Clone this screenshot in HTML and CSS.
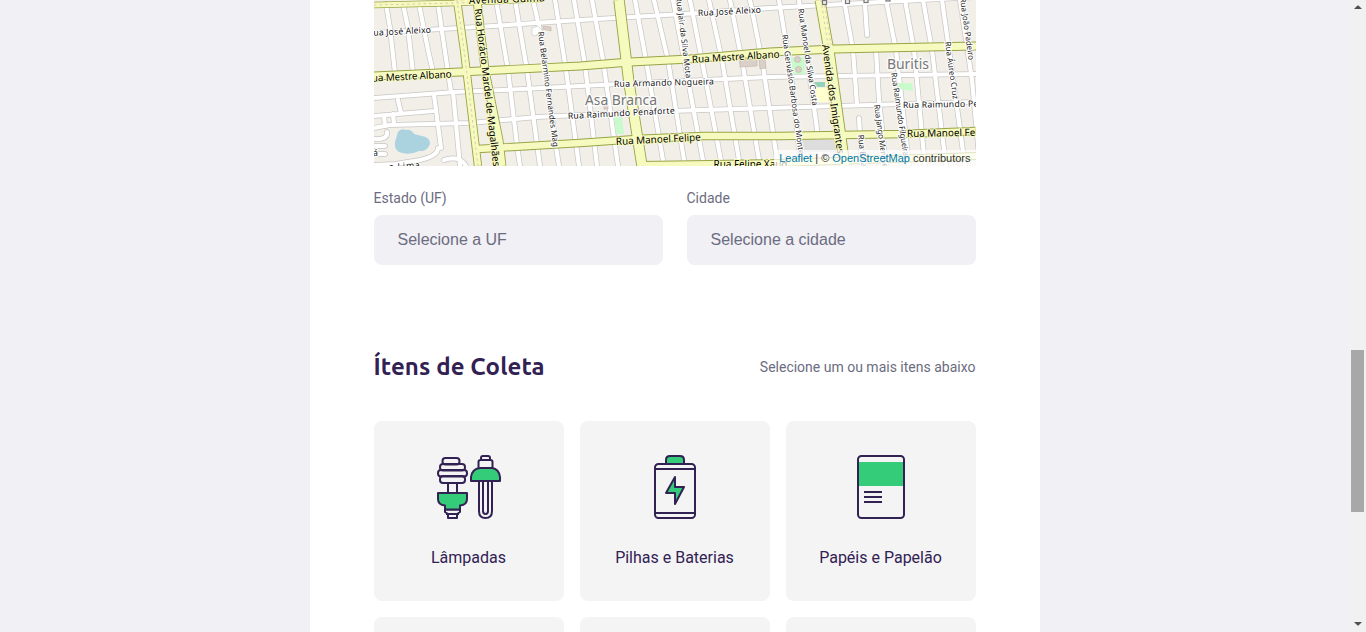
FILE: index.html
```html
<!DOCTYPE html>
<html lang="pt-BR">
<head>
<meta charset="utf-8">
<title>Ecoleta</title>
<link rel="stylesheet" href="styles.css">
</head>
<body>
<div class="page">
<main class="form">
  <div class="map">
    <svg class="map-canvas" viewBox="374 0 602 166" width="602" height="166">
      <defs>
        <g id="streets">
          <path d="M374 33L493 26L580 20L700 13L770 8L976 -3"/>
          <path d="M374 98L455 92L503 90L580 86L660 82L770 77L976 74"/>
          <path d="M374 128L390 125L470 123L537 117L580 115L670 111L770 108L903 104L976 102"/>
          <path d="M386 4L390 28L395 73M403 4L408 28L413 73M419 4L428 50L433 72M438 4L444 45L451 92"/>
          <path d="M434 95L438 125L441 148M453 92L460 166M374 116L434 111M398 100L401 113M384 116L385 126M393 114L394 124"/>
          <path d="M496 0L508 70L517 145L520 166M515 0L527 70L540 166M533 0L541 35L556 147L559 166M555 0L566 70L579 166"/>
          <path d="M574 0L585 65L597 166M592 0L603 60L618 166M635 0L646 60L664 166M654 0L668 60L685 166M673 0L688 80L704 166"/>
          <path d="M690 0L703 66L722 166M709 0L722 60L740 166M730 0L743 66L760 166M750 0L763 66L778 166"/>
          <path d="M779 0L790 67L801 166M799 0L813 100L822 166M844 0L853 50L857 105M865 5L867 35M886 0L896 50L909 166"/>
          <path d="M905 0L914 50L925 166M923 0L932 50L946 166M942 0L956 100L965 166M960 0L972 80L980 166M876 50L879 100L886 166M859 118L862 166"/>
          <path d="M374 139Q388 140 387 132M374 146L385 146M374 154L385 154M444 160Q460 155 466 166"/>
          <path d="M438 148Q438 156 420 160L395 164L374 165"/>
        </g>
        <g id="avenues">
          <path d="M374 5L455 3L540 -1" stroke-width="5"/>
          <path d="M374 76L460 72L580 66L630 62L690 59L770 52L835 49L976 46" stroke-width="7"/>
          <path d="M478 149L580 143L637 139L703 136L780 136L903 134L976 131" stroke-width="6.5"/>
          <path d="M640 165L780 163L976 156" stroke-width="6"/>
          <path d="M457 0L464 50L478 166" stroke-width="6.5"/>
          <path d="M477 0L485 70L499 140L502 166" stroke-width="7"/>
          <path d="M619 0L629 83L642 166" stroke-width="9.5"/>
          <path d="M820 0L830 57L845 166" stroke-width="9"/>
        </g>
      </defs>
      <rect class="land" x="374" width="602" height="166"/>
      <g class="casing"><use href="#streets"/></g>
      <g class="street"><use href="#streets"/></g>
      <path class="park" d="M614 117L622 117L624 134L616 134ZM791 57L804 57L805 74L792 74ZM898 83L912 83L913 91L898 89Z"/>
      <path class="school" d="M816 88L827 88L828 102L817 102Z"/>
      <path class="pitch" d="M814 82L825 82L825 87L816 87Z"/>
      <path class="grey" d="M802 140L836 140L838 152L803 152Z"/>
      <path class="building" d="M740 60L757 59L757 66L740 67ZM759 59L765 59L766 68L760 69ZM543 26L551 27L551 31L543 29ZM604 105L608 105L608 109L604 109Z"/>
      <path class="house" d="M532 28L538 26L542 30L542 34L537 34L537 36L532 35Z"/>
      <circle class="building" cx="797.500" cy="59.500" r="3"/><circle class="building" cx="798.500" cy="69.500" r="3"/>
      <path class="water" d="M398 132Q401 128 406 130Q411 129 414 134L422 136Q430 137 430 144Q427 152 419 151Q409 156 399 152Q394 149 395 142Z"/>
      <g class="avenue-edge">
        <path d="M374 5L455 3L540 -1" stroke-width="6.500"/>
        <path d="M374 76L460 72L580 66L630 62L690 59L770 52L835 49L976 46" stroke-width="8.800"/>
        <path d="M478 149L580 143L637 139L703 136L780 136L903 134L976 131" stroke-width="8.300"/>
        <path d="M640 165L780 163L976 156" stroke-width="7.800"/>
        <path d="M457 0L464 50L478 166" stroke-width="8.300"/>
        <path d="M477 0L485 70L499 140L502 166" stroke-width="8.800"/>
        <path d="M619 0L629 83L642 166" stroke-width="11.300"/>
        <path d="M820 0L830 57L845 166" stroke-width="10.800"/>
      </g>
      <g class="avenue"><use href="#avenues"/></g>
      <path class="median" d="M374 5L455 3L540 -1M457 0L464 50L478 166M821 0L828 45M824 0L831 45"/>
      <g class="signal"><rect x="822.500" y=".5" width="4" height="4"/><rect x="845.500" y="-.5" width="4" height="4"/><rect x="864" y="-1.500" width="4" height="4"/><rect x="886" y="-3" width="4" height="4"/></g>
      <g class="place">
        <text x="585" y="105" textLength="72">Asa Branca</text>
        <text x="887" y="68.500" textLength="42">Buritis</text>
      </g>
      <g class="road-name">
        <text x="469" y="4" textLength="76" transform="rotate(-2 469 4)">Avenida Guima</text>
        <text x="366" y="82" textLength="86" transform="rotate(-3 366 82)">Rua Mestre Albano</text>
        <text x="692" y="63" textLength="88" transform="rotate(-3.500 692 63)">Rua Mestre Albano</text>
        <text x="616" y="145" textLength="85" transform="rotate(-3 616 145)">Rua Manoel Felipe</text>
        <text x="907" y="137" textLength="85" transform="rotate(-1 907 137)">Rua Manoel Felipe</text>
        <text x="713.500" y="168" textLength="74">Rua Felipe Xaud</text>
        <text transform="translate(474.500 9) rotate(83.200)" textLength="159">Rua Horácio Mardel de Magalhães</text>
        <text transform="translate(822 45) rotate(82)" textLength="110">Avenida dos Imigrantes</text>
      </g>
      <g class="street-name">
        <text x="368" y="36" textLength="63" transform="rotate(-3 368 36)">Rua José Aleixo</text>
        <text x="698" y="16" textLength="63" transform="rotate(-3 698 16)">Rua José Aleixo</text>
        <text x="614" y="87" textLength="100" transform="rotate(-1.500 614 87)">Rua Armando Nogueira</text>
        <text x="568" y="119" textLength="107" transform="rotate(-3 568 119)">Rua Raimundo Penaforte</text>
        <text x="903" y="108" textLength="107" transform="rotate(-1 903 108)">Rua Raimundo Penaforte</text>
        <text x="389" y="170" textLength="31" transform="rotate(-4 389 170)">a Lima</text>
        <text x="373" y="156">á</text>
      </g>
      <g class="lane-name">
        <text transform="translate(538 32) rotate(82.500)" textLength="116">Rua Belarmino Fernandes Mag</text>
        <text transform="translate(676 -3) rotate(83)" textLength="82">Rua Jair da Silva Mota</text>
        <text transform="translate(798 9) rotate(81.500)" textLength="98">Rua Manoel da Silva Costa</text>
        <text transform="translate(782 35) rotate(82)" textLength="121">Rua Gervásio Barbosa do Monte</text>
        <text transform="translate(874 105) rotate(82)" textLength="67">Rua Jango Meneses</text>
        <text transform="translate(858 135) rotate(84)">Rua Bela</text>
        <text transform="translate(891 73) rotate(81.500)" textLength="88">Rua Raimundo Filgueiras</text>
        <text transform="translate(945 42) rotate(82)" textLength="58">Rua Áureo Cruz</text>
        <text transform="translate(960 -2) rotate(82)" textLength="63">Rua João Padeiro</text>
      </g>
    </svg>
    <div class="credit"><a>Leaflet</a> | © <a>OpenStreetMap</a> contributors</div>
  </div>
  <div class="fields">
    <label class="field">Estado (UF)<span class="select">Selecione a UF</span></label>
    <label class="field">Cidade<span class="select">Selecione a cidade</span></label>
  </div>
  <div class="legend"><h2>Ítens de Coleta</h2><span>Selecione um ou mais itens abaixo</span></div>
  <ul class="items">
    <li>
      <svg class="icon" width="66" height="66" viewBox="436 454 66 66">
        <rect x="442.500" y="458" width="17" height="6.500" rx="3"/><rect x="440" y="464" width="25" height="6.500" rx="3"/><rect x="438" y="470" width="29" height="6.500" rx="3"/><rect x="440" y="476" width="25" height="7" rx="3"/>
        <path d="M448 483V493M457 483V493M445 509.500H460V512L457 514V518H448V514L445 512ZM446 514H459"/>
        <path class="green" d="M438 493H467V499Q467 505 460 505.500V509.500H445V505.500Q438 505 438 499Z"/>
        <path d="M481 460V458Q481 456 483 456H488Q490 456 490 458V460M478.500 468V462Q478.500 460 480.500 460H490.500Q492.500 460 492.500 462V468M479 481V511Q479 518 485.500 518Q492 518 492 511V481M483 481V511Q483 514 485.500 514Q488 514 488 511V481"/>
        <path class="green" d="M471 481V477Q472 469 480 468H492Q499 469 500 477V481Z"/>
      </svg>
      Lâmpadas
    </li>
    <li>
      <svg class="icon" width="66" height="66" viewBox="642 454 66 66">
        <path class="green" d="M666 464V460Q666 456 670 456H680Q684 456 684 460V464Z"/>
        <rect x="655" y="464" width="40" height="54" rx="3.500"/><path d="M655 469H695M655 513H695"/>
        <path class="green" d="M675 477L666 493H675V504L684 487H675Z"/>
      </svg>
      Pilhas e Baterias
    </li>
    <li>
      <svg class="icon" width="66" height="66" viewBox="848 454 66 66">
        <path class="fill" d="M858 462H904V486H858Z"/><rect x="858" y="456" width="46" height="62" rx="3.500"/><path d="M864 492H882M864 497H882M864 502H882"/>
      </svg>
      Papéis e Papelão
    </li>
    <li></li><li></li><li></li>
  </ul>
</main>
</div>
<div class="scrollbar">
  <svg width="17" height="17"><path d="M5 9L8.500 5.500H9.500L13 9Z"/></svg>
  <div class="thumb"></div>
  <svg width="17" height="17"><path d="M5 7L8.500 10.500H9.500L13 7Z"/></svg>
</div>
</body>
</html>
```
FILE: styles.css
```css
* { box-sizing: border-box; }
body {
  margin: 0;
  height: 632px;
  display: flex;
  overflow: hidden;
  background: #f0f0f5;
  color: #6c6c80;
  font-family: Roboto, sans-serif;
}
.page { flex: 1; display: flex; justify-content: center; height: 632px; overflow: hidden; }
.form { width: 730px; flex: none; height: 1000px; padding: 0 64px; background: #fff; }
.map { position: relative; height: 166px; overflow: hidden; }
.map-canvas { display: block; }
.land { fill: #f2efe9; }
.casing, .street, .avenue, .avenue-edge { fill: none; stroke-linejoin: round; }
.casing { stroke: #c8c6c4; stroke-width: 5.6; stroke-linecap: round; }
.street { stroke: #fff; stroke-width: 4.2; stroke-linecap: round; }
.avenue-edge { stroke: #98a444; }
.avenue { stroke: #f7fabf; }
.median { fill: none; stroke: #dcc8b0; stroke-width: 1; stroke-dasharray: 2.5 3; }
.park { fill: #c8facc; }
.school { fill: #ffffcf; }
.pitch { fill: #94d2b8; }
.grey { fill: #dedddd; }
.building { fill: #d9d0c9; stroke: #c7b8ac; stroke-width: .7; }
.house { fill: #fff; stroke: #ccc; stroke-width: .7; }
.water { fill: #aad3df; }
.signal { fill: #eee; stroke: #777; stroke-width: 1.2; }
.map-canvas text { font-family: "Noto Sans", sans-serif; paint-order: stroke; stroke-linejoin: round; }
.place { font-size: 14px; fill: #777; stroke: #fff; stroke-opacity: .7; stroke-width: 3px; }
.road-name { font-size: 10px; fill: #000; stroke: #f7fabf; stroke-width: 2px; }
.street-name { font-size: 8.7px; fill: #111; stroke: #fff; stroke-width: 2px; }
.lane-name { font-size: 8px; fill: #222; stroke: #fff; stroke-width: 2px; }
.credit {
  position: absolute;
  right: 0;
  bottom: 0;
  padding: 0 5px;
  height: 16px;
  line-height: 16.5px;
  font-family: "Liberation Sans", sans-serif;
  font-size: 11px;
  color: #333;
  background: rgba(255, 255, 255, .7);
}
.credit a { color: #0078a8; }
.fields { display: grid; grid-template-columns: 289px 289px; gap: 24px; margin-top: 24px; }
.field { display: flex; flex-direction: column; gap: 8px; font-size: 14px; line-height: 17px; }
.select {
  height: 50px;
  padding: 0 24px;
  border-radius: 8px;
  background: #f0f0f5;
  font: 16px/49px "Liberation Sans", sans-serif;
}
.legend { display: flex; justify-content: space-between; align-items: center; height: 40px; margin: 82px 0 34px; font-size: 14px; }
.legend h2 {
  margin: 0;
  color: #322153;
  font: 700 24px/40px Ubuntu, "Noto Sans", sans-serif;
  letter-spacing: .1px;
}
.items { display: grid; grid-template-columns: repeat(3, 190px); grid-auto-rows: 180px; gap: 16px; margin: 0; padding: 0; list-style: none; }
.items li {
  display: flex;
  flex-direction: column;
  align-items: center;
  gap: 28px;
  padding-top: 33px;
  border-radius: 8px;
  background: #f4f4f4;
  color: #322153;
  font-size: 16px;
  line-height: 19px;
}
.icon { fill: none; stroke: #322153; stroke-width: 2; stroke-linejoin: round; }
.green { fill: #34cb79; }
.fill { fill: #34cb79; stroke: none; }
.scrollbar { width: 17px; height: 632px; display: flex; flex-direction: column; align-items: center; background: #f1f1f1; }
.scrollbar svg { flex: none; fill: #505050; }
.thumb { width: 13px; height: 162px; margin: 333px 0 103px; background: #a8a8a8; flex: none; }
```
